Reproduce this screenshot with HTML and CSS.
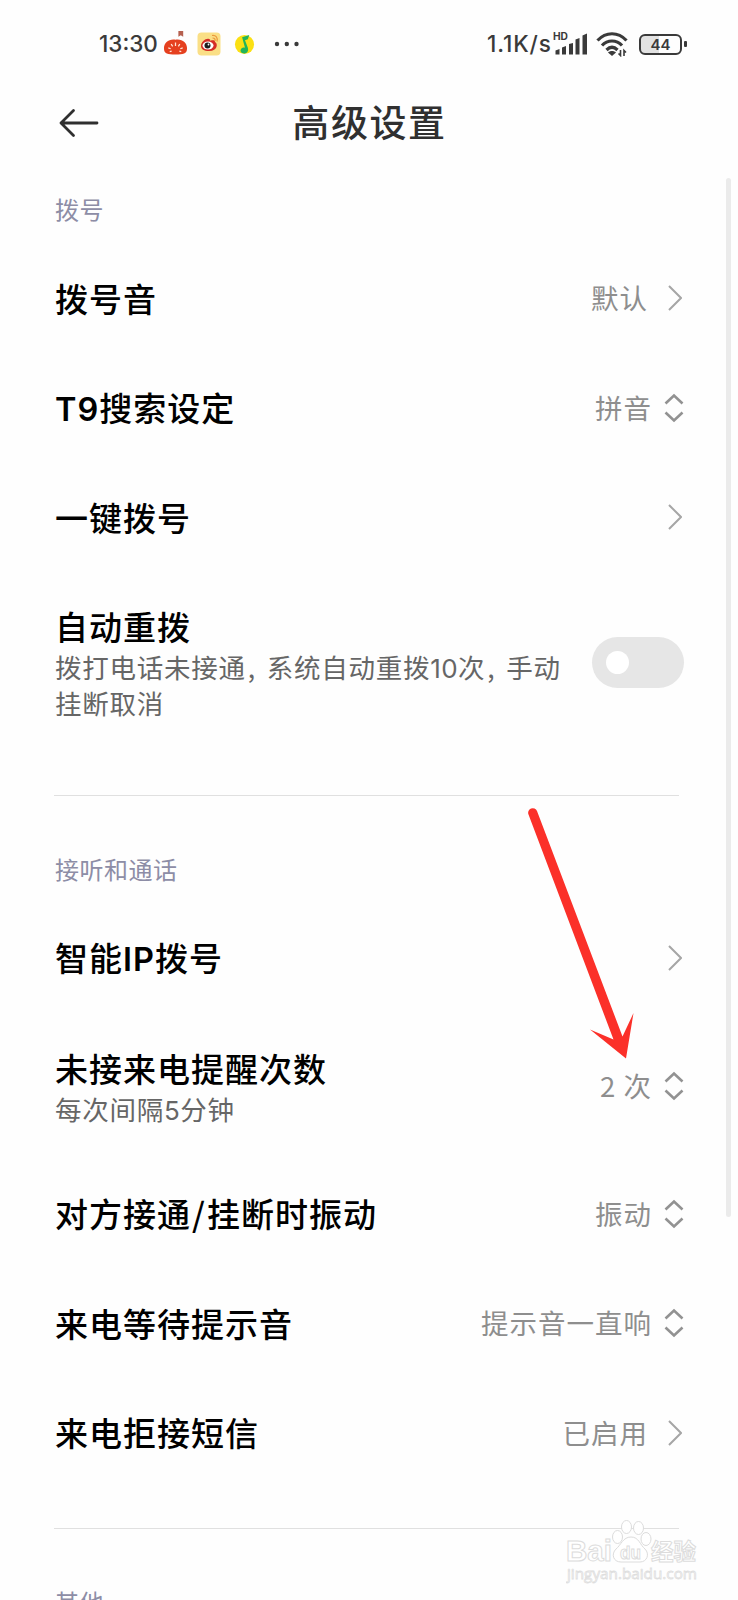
FILE: index.html
```html
<!DOCTYPE html>
<html lang="zh-CN">
<head>
    <meta charset="UTF-8">
    <meta name="viewport" content="width=device-width, initial-scale=1.0">
    <title>高级设置</title>
    <link rel="stylesheet" href="styles.css">
</head>
<body>
    <!-- shared icons -->
    <svg class="defs" width="0" height="0">
        <symbol id="next" viewBox="0 0 14 28"><path d="M1 2 L13 14 L1 26" fill="none" stroke="#a6a6a6" stroke-width="2"/></symbol>
        <symbol id="updown" viewBox="0 0 20 30"><path d="M1.5 10.5 L10 2.5 L18.5 10.5 M1.5 19.5 L10 27.5 L18.5 19.5" fill="none" stroke="#929292" stroke-width="2.6"/></symbol>
    </svg>

    <div class="screen">
        <div class="status">
            <span class="time">13:30</span>
            <svg class="app-icon tomato" viewBox="0 0 26 26">
                <path d="M16 0h5v6l-2.500-1.500L16 6z" fill="#b5604f"/>
                <path d="M13 9C20 8 25 12 25 18s-4 6.500-12 6.500S1 24 1 18 6 8 13 9z" fill="#e5401f"/>
                <path d="M13 12v3.500M8.500 13.500l1.500 2.500M17.500 13.500l-1.500 2.500M5.500 17.500l2.500 1M20.500 17.500l-2.500 1M7 21.500l2-.5M19 21.500l-2-.5" stroke="#ffe6d8" stroke-width="1.300"/>
            </svg>
            <svg class="app-icon weibo" viewBox="0 0 24 24">
                <rect x=".5" y=".5" width="23" height="23" rx="4" fill="#fadf86"/>
                <path d="M4 14c0-4 5-8 8-7 2 .5 1 2 1 2s5-2 5 1c3 1 3 9-6 9-5 0-8-2-8-5z" fill="#d52d26"/>
                <ellipse cx="11" cy="13.500" rx="5.500" ry="4" fill="#fff"/>
                <circle cx="10.500" cy="13.500" r="3" fill="#1c1c1c"/>
                <circle cx="11.500" cy="12.500" r=".9" fill="#fff"/>
                <path d="M15 3.500c4-.5 6 2 5 6M15.500 6c2 0 3 1 2.500 3" fill="none" stroke="#eb9a3d" stroke-width="1.200"/>
            </svg>
            <svg class="app-icon music" viewBox="0 0 22 22">
                <circle cx="11" cy="11" r="10" fill="#fbe013"/>
                <path d="M8.500 3.500L16 1l-1.500 4.500-3 1 3 8c1 4-1 6-4 6s-5-3-2.500-5.500c1-1 2.500-1 3.500-.5z" fill="#21b45b"/>
            </svg>
            <svg class="dots" viewBox="0 0 26 6"><circle cx="3" cy="3" r="2.200"/><circle cx="12.800" cy="3" r="2.200"/><circle cx="22.500" cy="3" r="2.200"/></svg>

            <div class="status-right">
                <span class="speed">1.1K/s</span>
                <svg class="signal" viewBox="0 0 36 26">
                    <text x="0" y="9.500" class="hd" textLength="15" lengthAdjust="spacingAndGlyphs">HD</text>
                    <path d="M2.500 24.500v-4l4-1.500v5.500zM9 24.500v-7l4-1.500v8.500zM16 24.500v-10.500l4-1v11.500zM22.500 24.500v-15l4-1.500v16.500zM29.500 24.500v-19l4.500-2v21z" fill="#3a3a3a"/>
                </svg>
                <svg class="wifi" viewBox="0 0 32 25">
                    <path d="M1.500 8.500C10-.5 22-.5 30.500 8.500M6 13.500c5.500-6 14.500-6 20 0M10.500 18c3.500-3.500 7.500-3.500 11 0" fill="none" stroke="#3a3a3a" stroke-width="3.200"/>
                    <path d="M12 20.500c2-2 6-2 8 0l-4 3.500z" fill="#3a3a3a"/>
                    <path d="M24.500 18v5.500l-2-2M28 24v-5.500l2 2" fill="none" stroke="#3a3a3a" stroke-width="1.600"/>
                </svg>
                <div class="battery"><span>44</span></div>
            </div>
        </div>

        <div class="header">
            <svg class="back" viewBox="0 0 42 30"><path d="M39 15H3M15.500 2.500L3 15l12.500 12.500" fill="none" stroke="#2f2f2f" stroke-width="2.800" stroke-linecap="round" stroke-linejoin="round"/></svg>
            <h1>高级设置</h1>
        </div>

        <div class="section">
            <h2>拨号</h2>
            <div class="row">
                <div class="name">拨号音</div>
                <div class="value">默认</div>
                <svg class="next"><use href="#next"/></svg>
            </div>
            <div class="row">
                <div class="name"><span class="latin">T9</span>搜索设定</div>
                <div class="value">拼音</div>
                <svg class="updown"><use href="#updown"/></svg>
            </div>
            <div class="row">
                <div class="name">一键拨号</div>
                <svg class="next"><use href="#next"/></svg>
            </div>
            <div class="row row-redial">
                <div class="text">
                    <div class="name">自动重拨</div>
                    <div class="desc">拨打电话未接通<span class="comma">,</span>系统自动重拨<span class="num">10</span>次<span class="comma">,</span>手动<br>挂断取消</div>
                </div>
                <div class="toggle"></div>
            </div>
        </div>

        <div class="divider"></div>

        <div class="section section-next">
            <h2>接听和通话</h2>
            <div class="row">
                <div class="name">智能<span class="latin ip">IP</span>拨号</div>
                <svg class="next"><use href="#next"/></svg>
            </div>
            <div class="row row-missed">
                <div class="text">
                    <div class="name">未接来电提醒次数</div>
                    <div class="desc">每次间隔<span class="num">5</span>分钟</div>
                </div>
                <div class="value">2 次</div>
                <svg class="updown"><use href="#updown"/></svg>
            </div>
            <div class="row">
                <div class="name">对方接通<span class="slash">/</span>挂断时振动</div>
                <div class="value">振动</div>
                <svg class="updown"><use href="#updown"/></svg>
            </div>
            <div class="row">
                <div class="name">来电等待提示音</div>
                <div class="value">提示音一直响</div>
                <svg class="updown"><use href="#updown"/></svg>
            </div>
            <div class="row">
                <div class="name">来电拒接短信</div>
                <div class="value">已启用</div>
                <svg class="next"><use href="#next"/></svg>
            </div>
        </div>

        <div class="divider divider-last"></div>

        <div class="section section-next">
            <h2>其他</h2>
        </div>

        <div class="scrollbar"></div>

        <svg class="pointer" viewBox="520 800 130 270">
            <path d="M528.500 814.500A4.400 4.400 0 0 1 537 811L622.500 1036.500 633.500 1013 626 1058.500 590 1029.500 613.500 1039.500z" fill="#fb3029"/>
        </svg>

        <svg class="watermark" viewBox="0 0 140 66">
            <g fill="#fff" stroke="#dcdcdc" stroke-width="1">
                <text x="0" y="41" class="wm-big" textLength="46" lengthAdjust="spacingAndGlyphs">Bai</text>
                <ellipse cx="51.500" cy="17" rx="5" ry="6.500"/>
                <ellipse cx="60.500" cy="7" rx="5" ry="6.500"/>
                <ellipse cx="72.500" cy="8" rx="5" ry="6.500"/>
                <ellipse cx="80" cy="19" rx="5" ry="6.500"/>
                <path d="M65 17c8 0 9 8 14 12 5 5 2 13-5 13H55c-8 0-10-8-5-13 5-4 7-12 15-12z"/>
                <text x="54" y="39" class="wm-du" textLength="21" lengthAdjust="spacingAndGlyphs">du</text>
                <text x="85" y="40" class="wm-cn" textLength="45" lengthAdjust="spacingAndGlyphs">经验</text>
            </g>
            <text x="1" y="59" class="wm-url" textLength="130" lengthAdjust="spacingAndGlyphs">jingyan.baidu.com</text>
        </svg>
    </div>
</body>
</html>
```
FILE: styles.css
```css
* {
    box-sizing: border-box;
}
body {
    margin: 0;
    background-color: #fefefe;
    font-family: "Noto Sans CJK SC", sans-serif;
    color: #000;
}
.defs {
    display: block;
}
.screen {
    position: relative;
    width: 738px;
    height: 1600px;
    overflow: hidden;
}

/* status bar */
.status {
    display: flex;
    align-items: center;
    height: 88px;
    padding: 0 51px 0 99px;
    color: #3a3a3a;
}
.time, .speed {
    font-family: Inter, sans-serif;
    font-size: 22.5px;
    font-weight: 500;
    line-height: 28px;
}
.time {
    width: 64px;
}
.app-icon {
    height: 24px;
}
.tomato {
    width: 25px;
    height: 25px;
    margin-bottom: 2px;
}
.weibo {
    width: 24px;
    margin-left: 9px;
}
.music {
    width: 21px;
    height: 21px;
    margin-left: 13px;
}
.dots {
    width: 26px;
    height: 6px;
    margin-left: 19px;
    fill: #3a3a3a;
}
.status-right {
    display: flex;
    align-items: center;
    margin-left: auto;
}
.speed {
    width: 66px;
    letter-spacing: 0.9px;
    white-space: nowrap;
}
.signal {
    width: 36px;
    height: 26px;
    margin-bottom: 2px;
}
.hd {
    font: bold 10px Inter, sans-serif;
    fill: #3a3a3a;
}
.wifi {
    width: 32px;
    height: 25px;
    margin-left: 7px;
}
.battery {
    position: relative;
    width: 43px;
    height: 21px;
    margin: 0 5px 0 11px;
    border: 2.5px solid #3a3a3a;
    border-radius: 6px;
    background: linear-gradient(90deg, #e2e2e2 46%, #fefefe 46%);
    font: 600 15px/17px Inter, sans-serif;
    text-align: center;
}
.battery::after {
    content: "";
    position: absolute;
    right: -7px;
    top: 5px;
    width: 3px;
    height: 6px;
    border-radius: 1px;
    background: #3a3a3a;
}

/* title bar */
.header {
    display: grid;
    grid-template-columns: 42px 1fr 42px;
    align-items: center;
    height: 69px;
    padding: 0 58px;
}
.back {
    width: 42px;
    height: 30px;
}
h1 {
    margin: 0 0 4px 1px;
    font-size: 37px;
    font-weight: 500;
    line-height: 50px;
    letter-spacing: 1.6px;
    text-align: center;
    color: #303030;
}

/* settings list */
.section {
    padding: 0 54px 0 55px;
}
h2 {
    margin: 0;
    padding-top: 35px;
    height: 87px;
    font-size: 24px;
    font-weight: 400;
    line-height: 34px;
    letter-spacing: 0.5px;
    color: #8d8da6;
}
.section-next h2 {
    height: 108px;
    padding-top: 56px;
}
.row {
    display: flex;
    align-items: center;
    height: 109.5px;
}
.row-redial {
    height: 180px;
}
.row-missed {
    height: 146.5px;
}
.name {
    padding-bottom: 2px;
    font-size: 33px;
    font-weight: 500;
    line-height: 44px;
    letter-spacing: 1px;
    white-space: nowrap;
}
.latin {
    font-family: Inter, sans-serif;
    font-size: 32.5px;
    font-weight: 600;
    line-height: 1;
}
.ip {
    letter-spacing: 1px;
}
.slash {
    padding: 0 1px;
}
.text .name {
    padding-bottom: 0;
}
.desc {
    padding-top: 1px;
    font-size: 26.5px;
    line-height: 36px;
    letter-spacing: 0.75px;
    color: #666;
    white-space: nowrap;
}
.num {
    font-family: Inter, sans-serif;
    font-size: 26px;
    line-height: 1;
    letter-spacing: 0.4px;
}
.comma {
    display: inline-block;
    width: 21px;
    padding-left: 2px;
}
.value {
    margin-left: auto;
    padding-bottom: 3px;
    font-size: 27.5px;
    line-height: 38px;
    letter-spacing: 1px;
    white-space: nowrap;
    color: #8e8e8e;
}
.next {
    width: 14px;
    height: 28px;
    margin-left: auto;
    margin-right: 2px;
    margin-bottom: 1px;
}
.value + .next {
    margin-left: 20px;
}
.updown {
    width: 20px;
    height: 30px;
    margin-left: 12px;
    margin-bottom: 1px;
}
.toggle {
    width: 92px;
    height: 51px;
    margin-left: auto;
    padding: 14px;
    border-radius: 26px;
    background: #e6e6e6;
}
.toggle::before {
    content: "";
    display: block;
    width: 23px;
    height: 23px;
    border-radius: 50%;
    background: #fff;
}
.divider {
    height: 1px;
    margin: 42px 59px 0 54px;
    background: #e0e0e0;
}
.divider-last {
    margin-top: 40px;
}

/* overlays */
.scrollbar {
    position: absolute;
    left: 726px;
    top: 178px;
    width: 5px;
    height: 1039px;
    border-radius: 3px;
    background: #ebebeb;
}
.pointer {
    position: absolute;
    left: 520px;
    top: 800px;
    width: 130px;
    height: 270px;
}
.watermark {
    position: absolute;
    left: 566px;
    top: 1520px;
    width: 140px;
    height: 66px;
}
.wm-big {
    font: bold 29px "Liberation Sans", sans-serif;
}
.wm-du {
    font: bold 19px "Liberation Sans", sans-serif;
}
.wm-cn {
    font: bold 23px "Noto Sans CJK SC", sans-serif;
}
.wm-url {
    font: 15px "Open Sans", sans-serif;
    fill: #fff;
    stroke: #dedede;
    stroke-width: 0.8;
}
```
